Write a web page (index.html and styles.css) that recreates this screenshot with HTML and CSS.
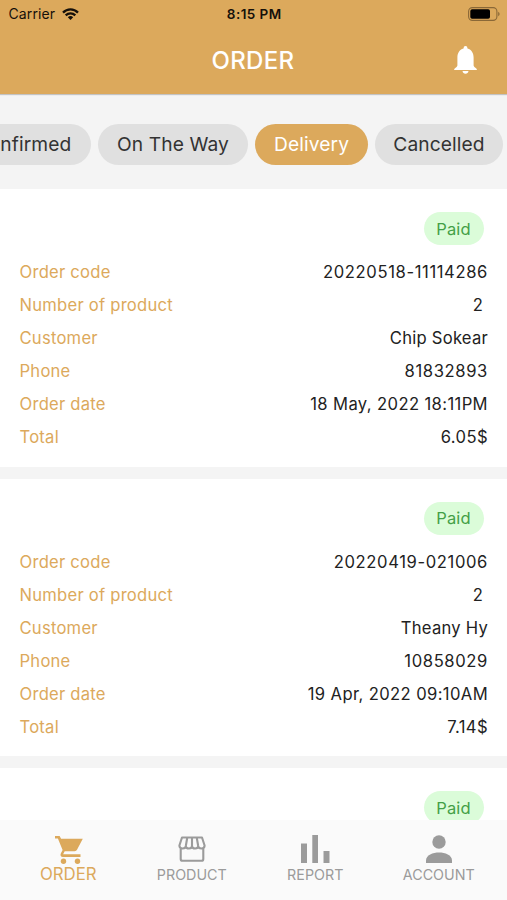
FILE: index.html
```html
<!DOCTYPE html>
<html lang="en">
<head>
<meta charset="utf-8">
<title>Order</title>
<link rel="stylesheet" href="styles.css">
</head>
<body>
<div class="screen">
  <header class="header">
    <div class="status">
      <div class="carrier"><span>Carrier</span>
        <svg class="wifi" viewBox="0 0 17 12" fill="none" stroke="#15100a" stroke-width="2.3"><path d="M1 4.6C5.2.3 11.800.3 16 4.600M3.700 7.400C6.400 4.700 10.600 4.700 13.300 7.400"/><path d="M8.500 12 5.800 9.300Q8.500 6.900 11.200 9.300Z" fill="#15100a" stroke="none"/></svg>
      </div>
      <div class="time">8:15 PM</div>
      <svg class="battery" viewBox="0 0 32 14"><rect x=".6" y=".6" width="28.300" height="12.800" rx="3.800" fill="none" stroke="#8a6837" stroke-width="1.100"/><rect x="2.300" y="2.300" width="19.700" height="9.400" rx="1.800" fill="#000"/><path d="M30.200 4.800Q31.600 5.500 31.600 7T30.200 9.200Z" fill="#8a6837"/></svg>
    </div>
    <div class="titlebar">
      <h1>ORDER</h1>
      <svg class="bell" viewBox="0 0 23 28" fill="#fff"><path d="M11.500 0Q13.500 0 13.500 2.400C17.800 3.500 19.600 7.300 19.600 11.500V19.500Q19.600 20.500 22.800 23V24H.2V23Q3.400 20.500 3.400 19.500V11.500C3.400 7.300 5.200 3.500 9.500 2.400Q9.500 0 11.500 0ZM8.500 25H14.500Q14 27.800 11.500 27.800T8.500 25Z"/></svg>
    </div>
  </header>
  <nav class="chips">
    <div class="chip c-confirmed">Confirmed</div>
    <div class="chip c-way">On The Way</div>
    <div class="chip c-delivery active">Delivery</div>
    <div class="chip c-cancelled">Cancelled</div>
  </nav>
  <main class="orders">
    <section class="card">
      <div class="badge">Paid</div>
      <dl>
        <div class="row"><dt>Order code</dt><dd class="number">20220518-11114286</dd></div>
        <div class="row"><dt>Number of product</dt><dd class="count">2</dd></div>
        <div class="row"><dt>Customer</dt><dd>Chip Sokear</dd></div>
        <div class="row"><dt>Phone</dt><dd class="number">81832893</dd></div>
        <div class="row"><dt>Order date</dt><dd class="date">18 May, 2022 18:11PM</dd></div>
        <div class="row"><dt>Total</dt><dd class="total">6.05$</dd></div>
      </dl>
    </section>
    <section class="card">
      <div class="badge">Paid</div>
      <dl>
        <div class="row"><dt>Order code</dt><dd class="number">20220419-021006</dd></div>
        <div class="row"><dt>Number of product</dt><dd class="count">2</dd></div>
        <div class="row"><dt>Customer</dt><dd>Theany Hy</dd></div>
        <div class="row"><dt>Phone</dt><dd class="number">10858029</dd></div>
        <div class="row"><dt>Order date</dt><dd class="date">19 Apr, 2022 09:10AM</dd></div>
        <div class="row"><dt>Total</dt><dd class="total">7.14$</dd></div>
      </dl>
    </section>
    <section class="card">
      <div class="badge">Paid</div>
    </section>
  </main>
  <nav class="tabs">
    <div class="tab selected">
      <svg viewBox="0 0 28 28" fill="currentColor"><path d="M0 0H4.600L6.100 2.800H27.800L22 13.800Q21.300 15.200 19.700 15.200H9.700L8.100 18.300H25.500V20.900H8C5.600 20.900 4.900 19.100 5.900 17.200L7.600 14.100 2.900 2.600H0Z"/><circle cx="8.500" cy="25.200" r="2.700"/><circle cx="22.500" cy="25.200" r="2.700"/></svg>
      <span>ORDER</span>
    </div>
    <div class="tab product">
      <svg viewBox="0 0 28 26" fill="none" stroke="currentColor" stroke-width="2.100" stroke-linejoin="round"><path d="M4 1.500H24L26.600 9.500Q26.600 12.500 23.400 12.500Q20.200 12.500 20.200 10Q20.200 12.500 17.100 12.500Q14 12.500 14 10Q14 12.500 10.900 12.500Q7.800 12.500 7.800 10Q7.800 12.500 4.600 12.500Q1.400 12.500 1.400 9.500ZM9.200 2 7.800 10M14 2V10M18.800 2 20.200 10M2.700 12.500V23Q2.700 24.800 4.500 24.800H23.500Q25.300 24.800 25.300 23V12.500"/></svg>
      <span>PRODUCT</span>
    </div>
    <div class="tab report">
      <svg viewBox="0 0 29 28" fill="currentColor"><path d="M0 8.500H6V28H0ZM11.300 0H17V28H11.300ZM22.500 16H28.500V28H22.500Z"/></svg>
      <span>REPORT</span>
    </div>
    <div class="tab account">
      <svg viewBox="0 0 26 28" fill="currentColor"><circle cx="13" cy="7" r="6.700"/><path d="M0 28V25.500C0 20 7 17.500 13 17.500S26 20 26 25.500V28Z"/></svg>
      <span>ACCOUNT</span>
    </div>
  </nav>
</div>
</body>
</html>
```
FILE: styles.css
```css
* { box-sizing: border-box; }
body { margin: 0; font-family: Inter, "Liberation Sans", sans-serif; }
h1, dl, dt, dd { margin: 0; font-weight: 400; }
svg { display: block; flex: none; }
.screen { height: 900px; display: flex; flex-direction: column; overflow: hidden; background: #f4f4f4; }

.header { flex: none; height: 94px; background: #dca95c; box-shadow: 0 1px 1px rgba(0, 0, 0, .2); }
.status { height: 27px; display: grid; grid-template-columns: 1fr auto 1fr; align-items: center; padding: 0 7px 0 8.500px; color: #15100a; }
.carrier { display: flex; align-items: center; gap: 7px; font-size: 14px; letter-spacing: .1px; }
.wifi { width: 17px; height: 12px; }
.time { font-size: 13.500px; font-weight: 600; letter-spacing: .45px; }
.battery { width: 32px; height: 14px; justify-self: end; }
.titlebar { height: 66px; display: grid; grid-template-columns: 1fr auto 1fr; align-items: center; padding: 0 30px 0 29px; }
.titlebar h1 { grid-column: 2; font-size: 24px; font-weight: 500; letter-spacing: .35px; color: #fff; }
.bell { width: 23px; height: 28px; justify-self: end; }

.chips { flex: none; height: 95px; padding: 5px 4px 0 0; display: flex; align-items: center; justify-content: flex-end; gap: 7px; }
.chip { flex: none; height: 41px; border-radius: 21px; display: flex; align-items: center; justify-content: center; background: #e0e0e0; color: #333; font-size: 19.200px; letter-spacing: .1px; }
.c-confirmed { width: 136px; }
.c-way { width: 150px; }
.c-delivery { width: 113px; }
.c-cancelled { width: 128px; }
.active { background: #dca95c; color: #fff; }

.orders { flex: 1; min-height: 0; overflow: hidden; display: flex; flex-direction: column; gap: 12px; }
.card { flex: none; height: 277.600px; padding: 23px 19px 0 19.500px; background: #fff; }
.badge { width: 60px; height: 33px; margin: 0 4px 10.500px auto; padding-right: 1px; border-radius: 17px; display: flex; align-items: center; justify-content: center; background: #dbfcd9; color: #43a047; font-size: 16.500px; letter-spacing: .1px; }
.row { height: 33px; display: flex; align-items: center; justify-content: space-between; font-size: 16.600px; letter-spacing: .24px; }
dt { color: #dca95c; }
dd { color: #222; }
.number { letter-spacing: .62px; }
.date { letter-spacing: .38px; }
.total { letter-spacing: .4px; }
.count { padding-right: 5px; }

.tabs { flex: none; height: 80px; padding: 0 6.500px; display: flex; background: #fafafa; color: #9b9b9b; }
.tab { flex: 1; display: flex; flex-direction: column; align-items: center; padding-top: 15px; font-size: 14.300px; }
.tab svg { height: 28px; width: 28px; }
.tab span { line-height: 20px; margin-top: 2px; }
.selected { color: #dca95c; font-size: 16.800px; }
.selected svg { margin: 1px 0 0 1px; }
.selected span { margin-top: 0; }
.product svg { height: 26px; margin: 1px 0; }
.report svg { width: 29px; }
.account svg { width: 26px; }
```
